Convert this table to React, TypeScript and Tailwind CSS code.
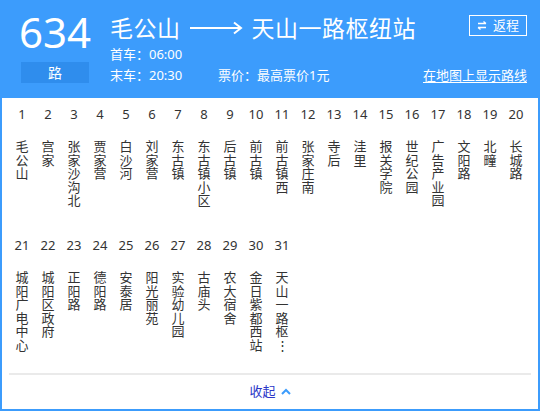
import React from 'react';

const stops = [
  '毛公山', '宫家', '张家沙沟北', '贾家营', '白沙河', '刘家营', '东古镇', '东古镇小区', '后古镇', '前古镇',
  '前古镇西', '张家庄南', '寺后', '洼里', '报关学院', '世纪公园', '广告产业园', '文阳路', '北疃', '长城路',
  '城阳广电中心', '城阳区政府', '正阳路', '德阳路', '安泰居', '阳光丽苑', '实验幼儿园', '古庙头', '农大宿舍', '金日紫都西站',
  '天山一路枢⋮',
];

const rows = [stops.slice(0, 20), stops.slice(20)];

function StopRow({ names, offset }: { names: string[]; offset: number }) {
  return (
    <div className="grid h-[131px] grid-cols-[repeat(20,26px)] content-start">
      {names.map((name, i) => (
        <div key={i} className="flex flex-col items-center">
          <div className="h-[18px] text-[13px] leading-[18px] text-[#333]">{offset + i + 1}</div>
          <div className="mt-[17px] w-[14px] break-all text-center text-[13px] leading-[13.5px] text-[#333]">
            {name}
          </div>
        </div>
      ))}
    </div>
  );
}

export default function App() {
  return (
    <div
      className="flex h-[411px] w-[540px] flex-col bg-[#3c9cfc] px-[2px] pb-[2px] text-white"
      style={{ fontFamily: '"Noto Sans", "Noto Sans CJK SC", sans-serif' }}
    >
      {/* header */}
      <div className="flex h-[98px] shrink-0 pr-[11px]">
        <div className="w-[108px] pl-[19px] pt-[9px]">
          <div className="w-[72px] -ml-[2px] text-center text-[42px] leading-[46px]">634</div>
          <div className="mt-[7px] h-[21px] w-[68px] bg-[#2f8ded] text-center text-[14px] leading-[21px]">路</div>
        </div>
        <div className="flex-1 pt-[12px]">
          <div className="flex h-[32px] items-center justify-between">
            <div className="flex items-center text-[23px] leading-[32px] tracking-[0.5px]">
              <span>毛公山</span>
              <svg className="mx-[9px]" width="53" height="14" viewBox="0 0 53 14">
                <line x1="0" y1="7" x2="51" y2="7" stroke="white" strokeWidth="2" />
                <path d="M44 1.5 L51 7 L44 12.5" fill="none" stroke="white" strokeWidth="2" />
              </svg>
              <span>天山一路枢纽站</span>
            </div>
            <button className="mb-[6px] flex h-[21px] w-[58px] items-center justify-center gap-[6px] border border-white text-[13px] leading-none text-white">
              <svg width="10" height="9" viewBox="0 0 10 9">
                <path d="M1 2.5 H9 M6.5 0.5 L9 2.5" fill="none" stroke="white" strokeWidth="1.3" />
                <path d="M9 6.5 H1 M3.5 8.5 L1 6.5" fill="none" stroke="white" strokeWidth="1.3" />
              </svg>
              <span>返程</span>
            </button>
          </div>
          <div className="text-[13px] leading-[21px]">首车：06:00</div>
          <div className="flex justify-between text-[13px] leading-[21px]">
            <div className="flex">
              <span className="w-[108px]">末车：20:30</span>
              <span>票价：最高票价1元</span>
            </div>
            <a className="underline underline-offset-2">在地图上显示路线</a>
          </div>
        </div>
      </div>

      {/* stops */}
      <div className="flex flex-1 flex-col bg-white">
        <div className="px-[7px] pt-[7px]">
          {rows.map((r, idx) => (
            <StopRow key={idx} names={r} offset={idx * 20} />
          ))}
        </div>
        <div className="mx-[7px] mt-[6px] border-t-2 border-[#eaeaea]" />
        <div className="flex flex-1 items-center justify-center gap-[5px] pb-[2px]">
          <span className="text-[13px] leading-none text-[#2b36c8]">收起</span>
          <svg width="10" height="7" viewBox="0 0 10 7">
            <path d="M1 6 L5 2 L9 6" fill="none" stroke="#3c9cfc" strokeWidth="2" />
          </svg>
        </div>
      </div>
    </div>
  );
}
